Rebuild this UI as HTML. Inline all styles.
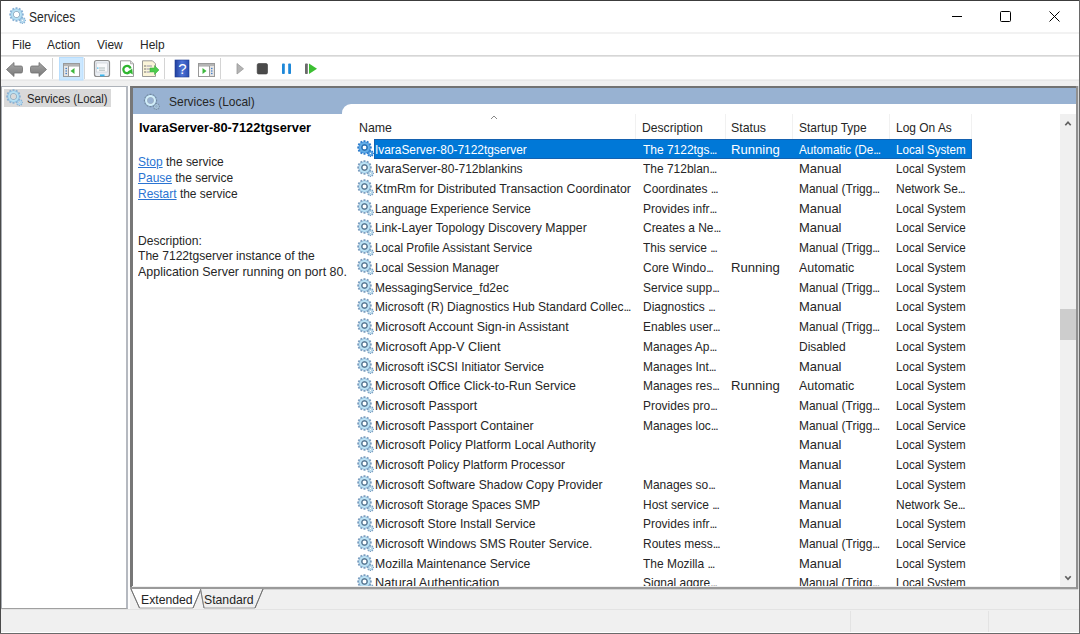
<!DOCTYPE html>
<html><head><meta charset="utf-8">
<style>
*{margin:0;padding:0;box-sizing:border-box}
html,body{width:1080px;height:634px;overflow:hidden;background:#f0f0f0;font-family:"Liberation Sans",sans-serif;color:#000}
.a{position:absolute}
.t{position:absolute;white-space:nowrap;font-size:13px;line-height:15px;transform-origin:0 0;transform:scaleX(.92);color:#262626}
.t.s{color:#fff}
.el{letter-spacing:-1.2px}
.gi{position:absolute;left:356.5px;width:17px;height:17px}
</style></head><body>
<svg width="0" height="0" style="position:absolute"><symbol id="gear" viewBox="0 0 17 17">
<defs><radialGradient id="gearg" cx="0.5" cy="0.5" r="0.5"><stop offset="0.3" stop-color="#d4f0fb"/><stop offset="1" stop-color="#b0dcf2"/></radialGradient></defs>
<path d="M15.89,12.65 L16.94,12.73 L16.94,14.07 L15.89,14.15 L15.69,14.63 L16.38,15.42 L15.42,16.38 L14.63,15.69 L14.15,15.89 L14.07,16.94 L12.73,16.94 L12.65,15.89 L12.17,15.69 L11.38,16.38 L10.42,15.42 L11.11,14.63 L10.91,14.15 L9.86,14.07 L9.86,12.73 L10.91,12.65 L11.11,12.17 L10.42,11.38 L11.38,10.42 L12.17,11.11 L12.65,10.91 L12.73,9.86 L14.07,9.86 L14.15,10.91 L14.63,11.11 L15.42,10.42 L16.38,11.38 L15.69,12.17Z M14.40,13.40 L14.32,13.78 L14.11,14.11 L13.78,14.32 L13.40,14.40 L13.02,14.32 L12.69,14.11 L12.48,13.78 L12.40,13.40 L12.48,13.02 L12.69,12.69 L13.02,12.48 L13.40,12.40 L13.78,12.48 L14.11,12.69 L14.32,13.02Z" fill="#7a9ec0" fill-rule="evenodd"/>
<path d="M15.90,13.40 L15.81,14.05 L15.57,14.65 L15.17,15.17 L14.65,15.57 L14.05,15.81 L13.40,15.90 L12.75,15.81 L12.15,15.57 L11.63,15.17 L11.23,14.65 L10.99,14.05 L10.90,13.40 L10.99,12.75 L11.23,12.15 L11.63,11.63 L12.15,11.23 L12.75,10.99 L13.40,10.90 L14.05,10.99 L14.65,11.23 L15.17,11.63 L15.57,12.15 L15.81,12.75Z M14.40,13.40 L14.32,13.78 L14.11,14.11 L13.78,14.32 L13.40,14.40 L13.02,14.32 L12.69,14.11 L12.48,13.78 L12.40,13.40 L12.48,13.02 L12.69,12.69 L13.02,12.48 L13.40,12.40 L13.78,12.48 L14.11,12.69 L14.32,13.02Z" fill="#c0e0f0" fill-rule="evenodd"/>
<path d="M13.08,6.35 L14.74,6.55 L14.74,8.45 L13.08,8.65 L12.91,9.30 L14.24,10.30 L13.30,11.94 L11.76,11.29 L11.29,11.76 L11.94,13.30 L10.30,14.24 L9.30,12.91 L8.65,13.08 L8.45,14.74 L6.55,14.74 L6.35,13.08 L5.70,12.91 L4.70,14.24 L3.06,13.30 L3.71,11.76 L3.24,11.29 L1.70,11.94 L0.76,10.30 L2.09,9.30 L1.92,8.65 L0.26,8.45 L0.26,6.55 L1.92,6.35 L2.09,5.70 L0.76,4.70 L1.70,3.06 L3.24,3.71 L3.71,3.24 L3.06,1.70 L4.70,0.76 L5.70,2.09 L6.35,1.92 L6.55,0.26 L8.45,0.26 L8.65,1.92 L9.30,2.09 L10.30,0.76 L11.94,1.70 L11.29,3.24 L11.76,3.71 L13.30,3.06 L14.24,4.70 L12.91,5.70Z M9.50,7.50 L9.48,7.81 L9.40,8.12 L9.28,8.41 L9.12,8.68 L8.91,8.91 L8.68,9.12 L8.41,9.28 L8.12,9.40 L7.81,9.48 L7.50,9.50 L7.19,9.48 L6.88,9.40 L6.59,9.28 L6.32,9.12 L6.09,8.91 L5.88,8.68 L5.72,8.41 L5.60,8.12 L5.52,7.81 L5.50,7.50 L5.52,7.19 L5.60,6.88 L5.72,6.59 L5.88,6.32 L6.09,6.09 L6.32,5.88 L6.59,5.72 L6.88,5.60 L7.19,5.52 L7.50,5.50 L7.81,5.52 L8.12,5.60 L8.41,5.72 L8.68,5.88 L8.91,6.09 L9.12,6.32 L9.28,6.59 L9.40,6.88 L9.48,7.19Z" fill="#7a9ec0" fill-rule="evenodd"/>
<path d="M13.00,7.50 L12.93,8.36 L12.73,9.20 L12.40,10.00 L11.95,10.73 L11.39,11.39 L10.73,11.95 L10.00,12.40 L9.20,12.73 L8.36,12.93 L7.50,13.00 L6.64,12.93 L5.80,12.73 L5.00,12.40 L4.27,11.95 L3.61,11.39 L3.05,10.73 L2.60,10.00 L2.27,9.20 L2.07,8.36 L2.00,7.50 L2.07,6.64 L2.27,5.80 L2.60,5.00 L3.05,4.27 L3.61,3.61 L4.27,3.05 L5.00,2.60 L5.80,2.27 L6.64,2.07 L7.50,2.00 L8.36,2.07 L9.20,2.27 L10.00,2.60 L10.73,3.05 L11.39,3.61 L11.95,4.27 L12.40,5.00 L12.73,5.80 L12.93,6.64Z M9.50,7.50 L9.48,7.81 L9.40,8.12 L9.28,8.41 L9.12,8.68 L8.91,8.91 L8.68,9.12 L8.41,9.28 L8.12,9.40 L7.81,9.48 L7.50,9.50 L7.19,9.48 L6.88,9.40 L6.59,9.28 L6.32,9.12 L6.09,8.91 L5.88,8.68 L5.72,8.41 L5.60,8.12 L5.52,7.81 L5.50,7.50 L5.52,7.19 L5.60,6.88 L5.72,6.59 L5.88,6.32 L6.09,6.09 L6.32,5.88 L6.59,5.72 L6.88,5.60 L7.19,5.52 L7.50,5.50 L7.81,5.52 L8.12,5.60 L8.41,5.72 L8.68,5.88 L8.91,6.09 L9.12,6.32 L9.28,6.59 L9.40,6.88 L9.48,7.19Z" fill="url(#gearg)" fill-rule="evenodd"/>
<path d="M10.90,7.50 L10.86,8.03 L10.73,8.55 L10.53,9.04 L10.25,9.50 L9.90,9.90 L9.50,10.25 L9.04,10.53 L8.55,10.73 L8.03,10.86 L7.50,10.90 L6.97,10.86 L6.45,10.73 L5.96,10.53 L5.50,10.25 L5.10,9.90 L4.75,9.50 L4.47,9.04 L4.27,8.55 L4.14,8.03 L4.10,7.50 L4.14,6.97 L4.27,6.45 L4.47,5.96 L4.75,5.50 L5.10,5.10 L5.50,4.75 L5.96,4.47 L6.45,4.27 L6.97,4.14 L7.50,4.10 L8.03,4.14 L8.55,4.27 L9.04,4.47 L9.50,4.75 L9.90,5.10 L10.25,5.50 L10.53,5.96 L10.73,6.45 L10.86,6.97Z M9.50,7.50 L9.48,7.81 L9.40,8.12 L9.28,8.41 L9.12,8.68 L8.91,8.91 L8.68,9.12 L8.41,9.28 L8.12,9.40 L7.81,9.48 L7.50,9.50 L7.19,9.48 L6.88,9.40 L6.59,9.28 L6.32,9.12 L6.09,8.91 L5.88,8.68 L5.72,8.41 L5.60,8.12 L5.52,7.81 L5.50,7.50 L5.52,7.19 L5.60,6.88 L5.72,6.59 L5.88,6.32 L6.09,6.09 L6.32,5.88 L6.59,5.72 L6.88,5.60 L7.19,5.52 L7.50,5.50 L7.81,5.52 L8.12,5.60 L8.41,5.72 L8.68,5.88 L8.91,6.09 L9.12,6.32 L9.28,6.59 L9.40,6.88 L9.48,7.19Z" fill="#5a7893" fill-rule="evenodd"/>
</symbol><symbol id="gears" viewBox="0 0 17 17">
<defs><radialGradient id="gearsg" cx="0.5" cy="0.5" r="0.5"><stop offset="0.3" stop-color="#7cc0f0"/><stop offset="1" stop-color="#56a4e4"/></radialGradient></defs>
<path d="M15.89,12.65 L16.94,12.73 L16.94,14.07 L15.89,14.15 L15.69,14.63 L16.38,15.42 L15.42,16.38 L14.63,15.69 L14.15,15.89 L14.07,16.94 L12.73,16.94 L12.65,15.89 L12.17,15.69 L11.38,16.38 L10.42,15.42 L11.11,14.63 L10.91,14.15 L9.86,14.07 L9.86,12.73 L10.91,12.65 L11.11,12.17 L10.42,11.38 L11.38,10.42 L12.17,11.11 L12.65,10.91 L12.73,9.86 L14.07,9.86 L14.15,10.91 L14.63,11.11 L15.42,10.42 L16.38,11.38 L15.69,12.17Z M14.40,13.40 L14.32,13.78 L14.11,14.11 L13.78,14.32 L13.40,14.40 L13.02,14.32 L12.69,14.11 L12.48,13.78 L12.40,13.40 L12.48,13.02 L12.69,12.69 L13.02,12.48 L13.40,12.40 L13.78,12.48 L14.11,12.69 L14.32,13.02Z" fill="#2c7ccc" fill-rule="evenodd"/>
<path d="M15.90,13.40 L15.81,14.05 L15.57,14.65 L15.17,15.17 L14.65,15.57 L14.05,15.81 L13.40,15.90 L12.75,15.81 L12.15,15.57 L11.63,15.17 L11.23,14.65 L10.99,14.05 L10.90,13.40 L10.99,12.75 L11.23,12.15 L11.63,11.63 L12.15,11.23 L12.75,10.99 L13.40,10.90 L14.05,10.99 L14.65,11.23 L15.17,11.63 L15.57,12.15 L15.81,12.75Z M14.40,13.40 L14.32,13.78 L14.11,14.11 L13.78,14.32 L13.40,14.40 L13.02,14.32 L12.69,14.11 L12.48,13.78 L12.40,13.40 L12.48,13.02 L12.69,12.69 L13.02,12.48 L13.40,12.40 L13.78,12.48 L14.11,12.69 L14.32,13.02Z" fill="#5aa6e6" fill-rule="evenodd"/>
<path d="M13.08,6.35 L14.74,6.55 L14.74,8.45 L13.08,8.65 L12.91,9.30 L14.24,10.30 L13.30,11.94 L11.76,11.29 L11.29,11.76 L11.94,13.30 L10.30,14.24 L9.30,12.91 L8.65,13.08 L8.45,14.74 L6.55,14.74 L6.35,13.08 L5.70,12.91 L4.70,14.24 L3.06,13.30 L3.71,11.76 L3.24,11.29 L1.70,11.94 L0.76,10.30 L2.09,9.30 L1.92,8.65 L0.26,8.45 L0.26,6.55 L1.92,6.35 L2.09,5.70 L0.76,4.70 L1.70,3.06 L3.24,3.71 L3.71,3.24 L3.06,1.70 L4.70,0.76 L5.70,2.09 L6.35,1.92 L6.55,0.26 L8.45,0.26 L8.65,1.92 L9.30,2.09 L10.30,0.76 L11.94,1.70 L11.29,3.24 L11.76,3.71 L13.30,3.06 L14.24,4.70 L12.91,5.70Z M9.50,7.50 L9.48,7.81 L9.40,8.12 L9.28,8.41 L9.12,8.68 L8.91,8.91 L8.68,9.12 L8.41,9.28 L8.12,9.40 L7.81,9.48 L7.50,9.50 L7.19,9.48 L6.88,9.40 L6.59,9.28 L6.32,9.12 L6.09,8.91 L5.88,8.68 L5.72,8.41 L5.60,8.12 L5.52,7.81 L5.50,7.50 L5.52,7.19 L5.60,6.88 L5.72,6.59 L5.88,6.32 L6.09,6.09 L6.32,5.88 L6.59,5.72 L6.88,5.60 L7.19,5.52 L7.50,5.50 L7.81,5.52 L8.12,5.60 L8.41,5.72 L8.68,5.88 L8.91,6.09 L9.12,6.32 L9.28,6.59 L9.40,6.88 L9.48,7.19Z" fill="#2c7ccc" fill-rule="evenodd"/>
<path d="M13.00,7.50 L12.93,8.36 L12.73,9.20 L12.40,10.00 L11.95,10.73 L11.39,11.39 L10.73,11.95 L10.00,12.40 L9.20,12.73 L8.36,12.93 L7.50,13.00 L6.64,12.93 L5.80,12.73 L5.00,12.40 L4.27,11.95 L3.61,11.39 L3.05,10.73 L2.60,10.00 L2.27,9.20 L2.07,8.36 L2.00,7.50 L2.07,6.64 L2.27,5.80 L2.60,5.00 L3.05,4.27 L3.61,3.61 L4.27,3.05 L5.00,2.60 L5.80,2.27 L6.64,2.07 L7.50,2.00 L8.36,2.07 L9.20,2.27 L10.00,2.60 L10.73,3.05 L11.39,3.61 L11.95,4.27 L12.40,5.00 L12.73,5.80 L12.93,6.64Z M9.50,7.50 L9.48,7.81 L9.40,8.12 L9.28,8.41 L9.12,8.68 L8.91,8.91 L8.68,9.12 L8.41,9.28 L8.12,9.40 L7.81,9.48 L7.50,9.50 L7.19,9.48 L6.88,9.40 L6.59,9.28 L6.32,9.12 L6.09,8.91 L5.88,8.68 L5.72,8.41 L5.60,8.12 L5.52,7.81 L5.50,7.50 L5.52,7.19 L5.60,6.88 L5.72,6.59 L5.88,6.32 L6.09,6.09 L6.32,5.88 L6.59,5.72 L6.88,5.60 L7.19,5.52 L7.50,5.50 L7.81,5.52 L8.12,5.60 L8.41,5.72 L8.68,5.88 L8.91,6.09 L9.12,6.32 L9.28,6.59 L9.40,6.88 L9.48,7.19Z" fill="url(#gearsg)" fill-rule="evenodd"/>
<path d="M10.90,7.50 L10.86,8.03 L10.73,8.55 L10.53,9.04 L10.25,9.50 L9.90,9.90 L9.50,10.25 L9.04,10.53 L8.55,10.73 L8.03,10.86 L7.50,10.90 L6.97,10.86 L6.45,10.73 L5.96,10.53 L5.50,10.25 L5.10,9.90 L4.75,9.50 L4.47,9.04 L4.27,8.55 L4.14,8.03 L4.10,7.50 L4.14,6.97 L4.27,6.45 L4.47,5.96 L4.75,5.50 L5.10,5.10 L5.50,4.75 L5.96,4.47 L6.45,4.27 L6.97,4.14 L7.50,4.10 L8.03,4.14 L8.55,4.27 L9.04,4.47 L9.50,4.75 L9.90,5.10 L10.25,5.50 L10.53,5.96 L10.73,6.45 L10.86,6.97Z M9.50,7.50 L9.48,7.81 L9.40,8.12 L9.28,8.41 L9.12,8.68 L8.91,8.91 L8.68,9.12 L8.41,9.28 L8.12,9.40 L7.81,9.48 L7.50,9.50 L7.19,9.48 L6.88,9.40 L6.59,9.28 L6.32,9.12 L6.09,8.91 L5.88,8.68 L5.72,8.41 L5.60,8.12 L5.52,7.81 L5.50,7.50 L5.52,7.19 L5.60,6.88 L5.72,6.59 L5.88,6.32 L6.09,6.09 L6.32,5.88 L6.59,5.72 L6.88,5.60 L7.19,5.52 L7.50,5.50 L7.81,5.52 L8.12,5.60 L8.41,5.72 L8.68,5.88 L8.91,6.09 L9.12,6.32 L9.28,6.59 L9.40,6.88 L9.48,7.19Z" fill="#2a6fb0" fill-rule="evenodd"/>
</symbol><symbol id="gearl" viewBox="0 0 17 17">
<defs><radialGradient id="gearlg" cx="0.5" cy="0.5" r="0.5"><stop offset="0.3" stop-color="#d4f2fc"/><stop offset="1" stop-color="#a8d8f0"/></radialGradient></defs>
<path d="M15.89,12.65 L16.94,12.73 L16.94,14.07 L15.89,14.15 L15.69,14.63 L16.38,15.42 L15.42,16.38 L14.63,15.69 L14.15,15.89 L14.07,16.94 L12.73,16.94 L12.65,15.89 L12.17,15.69 L11.38,16.38 L10.42,15.42 L11.11,14.63 L10.91,14.15 L9.86,14.07 L9.86,12.73 L10.91,12.65 L11.11,12.17 L10.42,11.38 L11.38,10.42 L12.17,11.11 L12.65,10.91 L12.73,9.86 L14.07,9.86 L14.15,10.91 L14.63,11.11 L15.42,10.42 L16.38,11.38 L15.69,12.17Z M14.40,13.40 L14.32,13.78 L14.11,14.11 L13.78,14.32 L13.40,14.40 L13.02,14.32 L12.69,14.11 L12.48,13.78 L12.40,13.40 L12.48,13.02 L12.69,12.69 L13.02,12.48 L13.40,12.40 L13.78,12.48 L14.11,12.69 L14.32,13.02Z" fill="#88b2d6" fill-rule="evenodd"/>
<path d="M15.90,13.40 L15.81,14.05 L15.57,14.65 L15.17,15.17 L14.65,15.57 L14.05,15.81 L13.40,15.90 L12.75,15.81 L12.15,15.57 L11.63,15.17 L11.23,14.65 L10.99,14.05 L10.90,13.40 L10.99,12.75 L11.23,12.15 L11.63,11.63 L12.15,11.23 L12.75,10.99 L13.40,10.90 L14.05,10.99 L14.65,11.23 L15.17,11.63 L15.57,12.15 L15.81,12.75Z M14.40,13.40 L14.32,13.78 L14.11,14.11 L13.78,14.32 L13.40,14.40 L13.02,14.32 L12.69,14.11 L12.48,13.78 L12.40,13.40 L12.48,13.02 L12.69,12.69 L13.02,12.48 L13.40,12.40 L13.78,12.48 L14.11,12.69 L14.32,13.02Z" fill="#b8dcf0" fill-rule="evenodd"/>
<path d="M13.08,6.35 L14.74,6.55 L14.74,8.45 L13.08,8.65 L12.91,9.30 L14.24,10.30 L13.30,11.94 L11.76,11.29 L11.29,11.76 L11.94,13.30 L10.30,14.24 L9.30,12.91 L8.65,13.08 L8.45,14.74 L6.55,14.74 L6.35,13.08 L5.70,12.91 L4.70,14.24 L3.06,13.30 L3.71,11.76 L3.24,11.29 L1.70,11.94 L0.76,10.30 L2.09,9.30 L1.92,8.65 L0.26,8.45 L0.26,6.55 L1.92,6.35 L2.09,5.70 L0.76,4.70 L1.70,3.06 L3.24,3.71 L3.71,3.24 L3.06,1.70 L4.70,0.76 L5.70,2.09 L6.35,1.92 L6.55,0.26 L8.45,0.26 L8.65,1.92 L9.30,2.09 L10.30,0.76 L11.94,1.70 L11.29,3.24 L11.76,3.71 L13.30,3.06 L14.24,4.70 L12.91,5.70Z M10.30,7.50 L10.27,7.94 L10.16,8.37 L9.99,8.77 L9.77,9.15 L9.48,9.48 L9.15,9.77 L8.77,9.99 L8.37,10.16 L7.94,10.27 L7.50,10.30 L7.06,10.27 L6.63,10.16 L6.23,9.99 L5.85,9.77 L5.52,9.48 L5.23,9.15 L5.01,8.77 L4.84,8.37 L4.73,7.94 L4.70,7.50 L4.73,7.06 L4.84,6.63 L5.01,6.23 L5.23,5.85 L5.52,5.52 L5.85,5.23 L6.23,5.01 L6.63,4.84 L7.06,4.73 L7.50,4.70 L7.94,4.73 L8.37,4.84 L8.77,5.01 L9.15,5.23 L9.48,5.52 L9.77,5.85 L9.99,6.23 L10.16,6.63 L10.27,7.06Z" fill="#88b2d6" fill-rule="evenodd"/>
<path d="M13.00,7.50 L12.93,8.36 L12.73,9.20 L12.40,10.00 L11.95,10.73 L11.39,11.39 L10.73,11.95 L10.00,12.40 L9.20,12.73 L8.36,12.93 L7.50,13.00 L6.64,12.93 L5.80,12.73 L5.00,12.40 L4.27,11.95 L3.61,11.39 L3.05,10.73 L2.60,10.00 L2.27,9.20 L2.07,8.36 L2.00,7.50 L2.07,6.64 L2.27,5.80 L2.60,5.00 L3.05,4.27 L3.61,3.61 L4.27,3.05 L5.00,2.60 L5.80,2.27 L6.64,2.07 L7.50,2.00 L8.36,2.07 L9.20,2.27 L10.00,2.60 L10.73,3.05 L11.39,3.61 L11.95,4.27 L12.40,5.00 L12.73,5.80 L12.93,6.64Z M10.30,7.50 L10.27,7.94 L10.16,8.37 L9.99,8.77 L9.77,9.15 L9.48,9.48 L9.15,9.77 L8.77,9.99 L8.37,10.16 L7.94,10.27 L7.50,10.30 L7.06,10.27 L6.63,10.16 L6.23,9.99 L5.85,9.77 L5.52,9.48 L5.23,9.15 L5.01,8.77 L4.84,8.37 L4.73,7.94 L4.70,7.50 L4.73,7.06 L4.84,6.63 L5.01,6.23 L5.23,5.85 L5.52,5.52 L5.85,5.23 L6.23,5.01 L6.63,4.84 L7.06,4.73 L7.50,4.70 L7.94,4.73 L8.37,4.84 L8.77,5.01 L9.15,5.23 L9.48,5.52 L9.77,5.85 L9.99,6.23 L10.16,6.63 L10.27,7.06Z" fill="url(#gearlg)" fill-rule="evenodd"/>
<path d="M11.00,7.50 L10.96,8.05 L10.83,8.58 L10.62,9.09 L10.33,9.56 L9.97,9.97 L9.56,10.33 L9.09,10.62 L8.58,10.83 L8.05,10.96 L7.50,11.00 L6.95,10.96 L6.42,10.83 L5.91,10.62 L5.44,10.33 L5.03,9.97 L4.67,9.56 L4.38,9.09 L4.17,8.58 L4.04,8.05 L4.00,7.50 L4.04,6.95 L4.17,6.42 L4.38,5.91 L4.67,5.44 L5.03,5.03 L5.44,4.67 L5.91,4.38 L6.42,4.17 L6.95,4.04 L7.50,4.00 L8.05,4.04 L8.58,4.17 L9.09,4.38 L9.56,4.67 L9.97,5.03 L10.33,5.44 L10.62,5.91 L10.83,6.42 L10.96,6.95Z M10.30,7.50 L10.27,7.94 L10.16,8.37 L9.99,8.77 L9.77,9.15 L9.48,9.48 L9.15,9.77 L8.77,9.99 L8.37,10.16 L7.94,10.27 L7.50,10.30 L7.06,10.27 L6.63,10.16 L6.23,9.99 L5.85,9.77 L5.52,9.48 L5.23,9.15 L5.01,8.77 L4.84,8.37 L4.73,7.94 L4.70,7.50 L4.73,7.06 L4.84,6.63 L5.01,6.23 L5.23,5.85 L5.52,5.52 L5.85,5.23 L6.23,5.01 L6.63,4.84 L7.06,4.73 L7.50,4.70 L7.94,4.73 L8.37,4.84 L8.77,5.01 L9.15,5.23 L9.48,5.52 L9.77,5.85 L9.99,6.23 L10.16,6.63 L10.27,7.06Z" fill="#8fa4b6" fill-rule="evenodd"/>
</symbol><symbol id="gearh" viewBox="0 0 17 17">
<defs><radialGradient id="gearhg" cx="0.5" cy="0.5" r="0.5"><stop offset="0.3" stop-color="#f4fcff"/><stop offset="1" stop-color="#c4e8f8"/></radialGradient></defs>
<path d="M15.89,12.65 L16.94,12.73 L16.94,14.07 L15.89,14.15 L15.69,14.63 L16.38,15.42 L15.42,16.38 L14.63,15.69 L14.15,15.89 L14.07,16.94 L12.73,16.94 L12.65,15.89 L12.17,15.69 L11.38,16.38 L10.42,15.42 L11.11,14.63 L10.91,14.15 L9.86,14.07 L9.86,12.73 L10.91,12.65 L11.11,12.17 L10.42,11.38 L11.38,10.42 L12.17,11.11 L12.65,10.91 L12.73,9.86 L14.07,9.86 L14.15,10.91 L14.63,11.11 L15.42,10.42 L16.38,11.38 L15.69,12.17Z M14.40,13.40 L14.32,13.78 L14.11,14.11 L13.78,14.32 L13.40,14.40 L13.02,14.32 L12.69,14.11 L12.48,13.78 L12.40,13.40 L12.48,13.02 L12.69,12.69 L13.02,12.48 L13.40,12.40 L13.78,12.48 L14.11,12.69 L14.32,13.02Z" fill="#7b91a8" fill-rule="evenodd"/>
<path d="M15.90,13.40 L15.81,14.05 L15.57,14.65 L15.17,15.17 L14.65,15.57 L14.05,15.81 L13.40,15.90 L12.75,15.81 L12.15,15.57 L11.63,15.17 L11.23,14.65 L10.99,14.05 L10.90,13.40 L10.99,12.75 L11.23,12.15 L11.63,11.63 L12.15,11.23 L12.75,10.99 L13.40,10.90 L14.05,10.99 L14.65,11.23 L15.17,11.63 L15.57,12.15 L15.81,12.75Z M14.40,13.40 L14.32,13.78 L14.11,14.11 L13.78,14.32 L13.40,14.40 L13.02,14.32 L12.69,14.11 L12.48,13.78 L12.40,13.40 L12.48,13.02 L12.69,12.69 L13.02,12.48 L13.40,12.40 L13.78,12.48 L14.11,12.69 L14.32,13.02Z" fill="#a9c6dc" fill-rule="evenodd"/>
<path d="M13.08,6.35 L14.14,6.63 L14.14,8.37 L13.08,8.65 L12.91,9.30 L13.69,10.07 L12.82,11.57 L11.76,11.29 L11.29,11.76 L11.57,12.82 L10.07,13.69 L9.30,12.91 L8.65,13.08 L8.37,14.14 L6.63,14.14 L6.35,13.08 L5.70,12.91 L4.93,13.69 L3.43,12.82 L3.71,11.76 L3.24,11.29 L2.18,11.57 L1.31,10.07 L2.09,9.30 L1.92,8.65 L0.86,8.37 L0.86,6.63 L1.92,6.35 L2.09,5.70 L1.31,4.93 L2.18,3.43 L3.24,3.71 L3.71,3.24 L3.43,2.18 L4.93,1.31 L5.70,2.09 L6.35,1.92 L6.63,0.86 L8.37,0.86 L8.65,1.92 L9.30,2.09 L10.07,1.31 L11.57,2.18 L11.29,3.24 L11.76,3.71 L12.82,3.43 L13.69,4.93 L12.91,5.70Z M10.60,7.50 L10.56,7.98 L10.45,8.46 L10.26,8.91 L10.01,9.32 L9.69,9.69 L9.32,10.01 L8.91,10.26 L8.46,10.45 L7.98,10.56 L7.50,10.60 L7.02,10.56 L6.54,10.45 L6.09,10.26 L5.68,10.01 L5.31,9.69 L4.99,9.32 L4.74,8.91 L4.55,8.46 L4.44,7.98 L4.40,7.50 L4.44,7.02 L4.55,6.54 L4.74,6.09 L4.99,5.68 L5.31,5.31 L5.68,4.99 L6.09,4.74 L6.54,4.55 L7.02,4.44 L7.50,4.40 L7.98,4.44 L8.46,4.55 L8.91,4.74 L9.32,4.99 L9.69,5.31 L10.01,5.68 L10.26,6.09 L10.45,6.54 L10.56,7.02Z" fill="#71879f" fill-rule="evenodd"/>
<path d="M13.00,7.50 L12.93,8.36 L12.73,9.20 L12.40,10.00 L11.95,10.73 L11.39,11.39 L10.73,11.95 L10.00,12.40 L9.20,12.73 L8.36,12.93 L7.50,13.00 L6.64,12.93 L5.80,12.73 L5.00,12.40 L4.27,11.95 L3.61,11.39 L3.05,10.73 L2.60,10.00 L2.27,9.20 L2.07,8.36 L2.00,7.50 L2.07,6.64 L2.27,5.80 L2.60,5.00 L3.05,4.27 L3.61,3.61 L4.27,3.05 L5.00,2.60 L5.80,2.27 L6.64,2.07 L7.50,2.00 L8.36,2.07 L9.20,2.27 L10.00,2.60 L10.73,3.05 L11.39,3.61 L11.95,4.27 L12.40,5.00 L12.73,5.80 L12.93,6.64Z M10.60,7.50 L10.56,7.98 L10.45,8.46 L10.26,8.91 L10.01,9.32 L9.69,9.69 L9.32,10.01 L8.91,10.26 L8.46,10.45 L7.98,10.56 L7.50,10.60 L7.02,10.56 L6.54,10.45 L6.09,10.26 L5.68,10.01 L5.31,9.69 L4.99,9.32 L4.74,8.91 L4.55,8.46 L4.44,7.98 L4.40,7.50 L4.44,7.02 L4.55,6.54 L4.74,6.09 L4.99,5.68 L5.31,5.31 L5.68,4.99 L6.09,4.74 L6.54,4.55 L7.02,4.44 L7.50,4.40 L7.98,4.44 L8.46,4.55 L8.91,4.74 L9.32,4.99 L9.69,5.31 L10.01,5.68 L10.26,6.09 L10.45,6.54 L10.56,7.02Z" fill="url(#gearhg)" fill-rule="evenodd"/>
<path d="M11.00,7.50 L10.96,8.05 L10.83,8.58 L10.62,9.09 L10.33,9.56 L9.97,9.97 L9.56,10.33 L9.09,10.62 L8.58,10.83 L8.05,10.96 L7.50,11.00 L6.95,10.96 L6.42,10.83 L5.91,10.62 L5.44,10.33 L5.03,9.97 L4.67,9.56 L4.38,9.09 L4.17,8.58 L4.04,8.05 L4.00,7.50 L4.04,6.95 L4.17,6.42 L4.38,5.91 L4.67,5.44 L5.03,5.03 L5.44,4.67 L5.91,4.38 L6.42,4.17 L6.95,4.04 L7.50,4.00 L8.05,4.04 L8.58,4.17 L9.09,4.38 L9.56,4.67 L9.97,5.03 L10.33,5.44 L10.62,5.91 L10.83,6.42 L10.96,6.95Z M10.60,7.50 L10.56,7.98 L10.45,8.46 L10.26,8.91 L10.01,9.32 L9.69,9.69 L9.32,10.01 L8.91,10.26 L8.46,10.45 L7.98,10.56 L7.50,10.60 L7.02,10.56 L6.54,10.45 L6.09,10.26 L5.68,10.01 L5.31,9.69 L4.99,9.32 L4.74,8.91 L4.55,8.46 L4.44,7.98 L4.40,7.50 L4.44,7.02 L4.55,6.54 L4.74,6.09 L4.99,5.68 L5.31,5.31 L5.68,4.99 L6.09,4.74 L6.54,4.55 L7.02,4.44 L7.50,4.40 L7.98,4.44 L8.46,4.55 L8.91,4.74 L9.32,4.99 L9.69,5.31 L10.01,5.68 L10.26,6.09 L10.45,6.54 L10.56,7.02Z" fill="#8da4ba" fill-rule="evenodd"/>
</symbol></svg>
<!-- window bg -->
<div class="a" style="left:0;top:0;width:1080px;height:634px;background:#fff"></div>
<!-- title bar -->
<svg class="a" style="left:8.5px;top:7px;width:17px;height:17px"><use href="#gearl"/></svg>
<div class="t" style="left:29px;top:10px;font-size:14px;transform:scaleX(.86)">Services</div>
<div class="a" style="left:952px;top:16px;width:10px;height:1px;background:#000"></div>
<div class="a" style="left:1000px;top:11px;width:11px;height:11px;border:1px solid #000;border-radius:1.5px"></div>
<svg class="a" style="left:1048px;top:10px;width:13px;height:13px" viewBox="0 0 13 13"><path d="M1.5 1.5L11.5 11.5M11.5 1.5L1.5 11.5" stroke="#000" stroke-width="1"/></svg>
<div class="a" style="left:1px;top:32px;width:1078px;height:2px;background:#f2f2f2"></div>
<!-- menu -->
<div class="t" style="left:12px;top:37px">File</div>
<div class="t" style="left:47px;top:37px">Action</div>
<div class="t" style="left:97px;top:37px">View</div>
<div class="t" style="left:139.5px;top:37px">Help</div>
<div class="a" style="left:1px;top:55px;width:1078px;height:1px;background:#d6d6d6"></div><div class="a" style="left:1px;top:56px;width:1078px;height:1px;background:#e4e4e4"></div>
<!-- toolbar band -->
<div class="a" style="left:1px;top:79px;width:1078px;height:554px;background:#f0f0f0"></div><div class="a" style="left:1px;top:80px;width:1078px;height:1px;background:#e8e8e8"></div>
<!-- toolbar icons -->
<div class="a" style="left:52px;top:58px;width:1px;height:21px;background:#d4d4d4"></div>
<div class="a" style="left:84px;top:58px;width:1px;height:21px;background:#d4d4d4"></div>
<div class="a" style="left:164px;top:58px;width:1px;height:21px;background:#d4d4d4"></div>
<div class="a" style="left:220px;top:58px;width:1px;height:21px;background:#d4d4d4"></div>
<svg class="a" style="left:0;top:56px;width:330px;height:25px" viewBox="0 56 330 25">
<defs>
<linearGradient id="ag" x1="0" y1="0" x2="0" y2="1"><stop offset="0" stop-color="#a8a8a8"/><stop offset="1" stop-color="#777"/></linearGradient>
<linearGradient id="hg" x1="0" y1="0" x2="1" y2="0"><stop offset="0" stop-color="#1f3f9e"/><stop offset="0.5" stop-color="#4f74d8"/><stop offset="1" stop-color="#2a4db0"/></linearGradient>
</defs>
<path d="M6.5 69.5 L14 62.5 L14 66 L21 66 Q22.5 66 22.5 67.5 L22.5 71.5 Q22.5 73 21 73 L14 73 L14 76.5 Z" fill="url(#ag)" stroke="#707070" stroke-width="0.8"/>
<path d="M46.5 69.5 L39 62.5 L39 66 L32 66 Q30.5 66 30.5 67.5 L30.5 71.5 Q30.5 73 32 73 L39 73 L39 76.5 Z" fill="url(#ag)" stroke="#707070" stroke-width="0.8"/>
<rect x="59.5" y="57.5" width="23.5" height="22.5" fill="#cce8ff" stroke="#b8defe" stroke-width="1"/>
<rect x="63.5" y="63.5" width="16" height="13" fill="#fff" stroke="#999" stroke-width="1"/>
<rect x="64" y="64" width="15" height="2" fill="#b4b4b4"/><rect x="64" y="66" width="15" height="1" fill="#d0d0d0"/>
<rect x="64" y="66" width="4.5" height="10" fill="#e4e4e4"/>
<line x1="68.5" y1="66" x2="68.5" y2="76" stroke="#9a9a9a" stroke-width="1"/>
<circle cx="66.2" cy="68.5" r="0.8" fill="#3a78c8"/><circle cx="66.2" cy="71" r="0.8" fill="#3a78c8"/><circle cx="66.2" cy="73.5" r="0.8" fill="#3a78c8"/>
<path d="M70.5 71 L74.5 68 L74.5 74 Z" fill="#3db83d"/>
<rect x="94.5" y="60.5" width="15" height="16" rx="2" fill="#e9edf2" stroke="#8e8e8e" stroke-width="1.2"/>
<rect x="96.5" y="63" width="11" height="9" fill="#f8f9fb" stroke="#c5c9cf" stroke-width="0.6"/>
<line x1="99" y1="68" x2="105" y2="68" stroke="#9aa" stroke-width="0.8"/><line x1="99" y1="70.2" x2="105" y2="70.2" stroke="#9aa" stroke-width="0.8"/>
<rect x="97" y="67.5" width="1.5" height="1.2" fill="#4cc0f0"/>
<rect x="100" y="74.5" width="4.5" height="1.8" fill="#3bb6ee"/>
<path d="M120.5 60.8 L130.5 60.8 L133.5 63.8 L133.5 76.5 L120.5 76.5 Z" fill="#fff" stroke="#8f8f8f" stroke-width="0.9"/>
<path d="M130.5 60.8 L130.5 63.8 L133.5 63.8" fill="#ddd" stroke="#8f8f8f" stroke-width="0.6"/>
<path d="M129.6 72.2 A3.7 3.7 0 1 1 130.6 68.5" fill="none" stroke="#2fb52f" stroke-width="2.3"/>
<path d="M127.6 71.6 L132.8 74.6 L132.2 68.8 Z" fill="#2fb52f"/>
<path d="M142.5 60.8 L152.5 60.8 L155.5 63.8 L155.5 76.5 L142.5 76.5 Z" fill="#fbf5d9" stroke="#8f8f8f" stroke-width="0.9"/>
<circle cx="145" cy="66" r="0.7" fill="#444"/><circle cx="145" cy="69" r="0.7" fill="#444"/><circle cx="145" cy="72" r="0.7" fill="#444"/>
<line x1="146.5" y1="66" x2="152" y2="66" stroke="#8a8aa8" stroke-width="0.9"/><line x1="146.5" y1="69" x2="151" y2="69" stroke="#8a8aa8" stroke-width="0.9"/><line x1="146.5" y1="72" x2="150" y2="72" stroke="#8a8aa8" stroke-width="0.9"/>
<path d="M150 68 L154.5 68 L154.5 65.5 L159 70 L154.5 74.5 L154.5 72 L150 72 Z" fill="#4ccc4c" stroke="#36a836" stroke-width="0.5"/>
<rect x="175" y="60" width="14" height="17" fill="url(#hg)" stroke="#1d3a90" stroke-width="0.6"/>
<text x="182.3" y="74.3" font-family="Liberation Sans" font-size="15" fill="#fff" text-anchor="middle">?</text>
<rect x="198.5" y="63.5" width="16" height="13" fill="#fff" stroke="#999" stroke-width="1"/>
<rect x="199" y="64" width="15" height="2" fill="#b4b4b4"/><rect x="199" y="66" width="15" height="1" fill="#d0d0d0"/>
<rect x="209.5" y="66" width="4.5" height="10" fill="#e4e4e4"/>
<line x1="209.5" y1="66" x2="209.5" y2="76" stroke="#9a9a9a" stroke-width="1"/>
<circle cx="211.8" cy="68.5" r="0.8" fill="#3a78c8"/><circle cx="211.8" cy="71" r="0.8" fill="#3a78c8"/><circle cx="211.8" cy="73.5" r="0.8" fill="#3a78c8"/>
<path d="M202.5 68 L206.5 71 L202.5 74 Z" fill="#3db83d"/>
<path d="M237 63.5 L243.5 68.8 L237 74 Z" fill="#b4b4b4" stroke="#9a9a9a" stroke-width="0.8"/>
<rect x="257.2" y="63.5" width="10.3" height="10.5" rx="1.5" fill="#4a4a4a" stroke="#3a3a3a" stroke-width="0.6"/>
<rect x="282" y="63.5" width="2.8" height="10.5" rx="0.8" fill="#1e88d9"/>
<rect x="288.2" y="63.5" width="2.8" height="10.5" rx="0.8" fill="#1e88d9"/>
<rect x="305" y="63.5" width="2.8" height="10.5" rx="0.8" fill="#6a6a6a"/>
<path d="M309 63.5 L317 68.8 L309 74 Z" fill="#3cbf32"/>
</svg>
<!-- left pane -->
<div class="a" style="left:1px;top:86px;width:127px;height:523px;background:#fff;border-top:1px solid #aeb3ba;border-right:2px solid #b5b9c0;border-bottom:1px solid #a0a0a0;border-left:1px solid #a8acb2"></div><div class="a" style="left:128px;top:86px;width:2px;height:523px;background:#fdfdfd"></div>
<div class="a" style="left:4px;top:89px;width:107px;height:18px;background:#d9d9d9"></div>
<svg class="a" style="left:5.5px;top:88.5px;width:17px;height:17px"><use href="#gearl"/></svg>
<div class="t" style="left:27px;top:91px;transform:scaleX(.865)">Services (Local)</div>
<!-- right pane -->
<div class="a" style="left:130px;top:86px;width:950px;height:503px;background:#fff;border-left:3px solid #777;border-top:2px solid #727272;border-bottom:2px solid #8a8a8a;border-right:1px solid #8a8a8a"></div>
<div class="a" style="left:133px;top:88px;width:945px;height:26px;background:#98b2d2"></div>
<div class="a" style="left:342px;top:104px;width:736px;height:20px;background:#fff;border-top-left-radius:9px"></div>
<svg class="a" style="left:142.5px;top:93px;width:17px;height:17px"><use href="#gearh"/></svg>
<div class="t" style="left:169px;top:94px">Services (Local)</div>
<!-- detail -->
<div class="t" style="left:138.5px;top:120px;font-weight:bold;color:#000;transform:scaleX(.988)">IvaraServer-80-7122tgserver</div>
<div class="t" style="left:137.5px;top:154px"><span style="color:#2a74d2;text-decoration:underline">Stop</span> the service</div>
<div class="t" style="left:137.5px;top:170px"><span style="color:#2a74d2;text-decoration:underline">Pause</span> the service</div>
<div class="t" style="left:137.5px;top:185.5px"><span style="color:#2a74d2;text-decoration:underline">Restart</span> the service</div>
<div class="t" style="left:137.5px;top:232.5px;transform:scaleX(.93)">Description:</div>
<div class="t" style="left:137.5px;top:248px;transform:scaleX(.93)">The 7122tgserver instance of the</div>
<div class="t" style="left:137.5px;top:263.5px;transform:scaleX(.957)">Application Server running on port 80.</div>
<!-- list header -->
<div class="t" style="left:358.5px;top:120px;transform:scaleX(.95)">Name</div>
<div class="t" style="left:641.5px;top:120px;transform:scaleX(.935)">Description</div>
<div class="t" style="left:730.5px;top:120px;transform:scaleX(.95)">Status</div>
<div class="t" style="left:799px;top:120px">Startup Type</div>
<div class="t" style="left:896px;top:120px">Log On As</div>
<svg class="a" style="left:490px;top:114px;width:8px;height:6px" viewBox="0 0 8 6"><path d="M1 5L4 2L7 5" fill="none" stroke="#888" stroke-width="1"/></svg>
<div class="a" style="left:635px;top:114px;width:1px;height:25px;background:#f1f1f1"></div>
<div class="a" style="left:725px;top:114px;width:1px;height:25px;background:#f1f1f1"></div>
<div class="a" style="left:792px;top:114px;width:1px;height:25px;background:#f1f1f1"></div>
<div class="a" style="left:889px;top:114px;width:1px;height:25px;background:#f1f1f1"></div>
<div class="a" style="left:971px;top:114px;width:1px;height:25px;background:#f1f1f1"></div>
<!-- selection -->
<div class="a" style="left:373.5px;top:139.2px;width:598.5px;height:19.4px;background:#0078d7;border:1px solid #1461b0"></div>
<div class="a" style="left:132px;top:586px;width:946px;height:2px;background:#fff"></div>
<svg class="gi" style="top:140.00px"><use href="#gears"/></svg>
<div class="t s" style="left:375px;top:141.50px;transform:scaleX(0.9133)">IvaraServer-80-7122tgserver</div>
<div class="t s" style="left:642.5px;top:141.50px">The 7122tgs<span class="el">...</span></div>
<div class="t s" style="left:730.8px;top:141.50px;transform:scaleX(1.0076)">Running</div>
<div class="t s" style="left:799.3px;top:141.50px;transform:scaleX(0.9020)">Automatic (De<span class="el">...</span></div>
<div class="t s" style="left:895.8px;top:141.50px;transform:scaleX(0.8930)">Local System</div>
<svg class="gi" style="top:159.73px"><use href="#gear"/></svg>
<div class="t" style="left:375px;top:161.23px;transform:scaleX(0.9244)">IvaraServer-80-712blankins</div>
<div class="t" style="left:642.5px;top:161.23px">The 712blan<span class="el">...</span></div>
<div class="t" style="left:799.3px;top:161.23px;transform:scaleX(0.9967)">Manual</div>
<div class="t" style="left:895.8px;top:161.23px;transform:scaleX(0.8930)">Local System</div>
<svg class="gi" style="top:179.45px"><use href="#gear"/></svg>
<div class="t" style="left:375px;top:180.95px;transform:scaleX(0.9469)">KtmRm for Distributed Transaction Coordinator</div>
<div class="t" style="left:642.5px;top:180.95px">Coordinates <span class="el">...</span></div>
<div class="t" style="left:799.3px;top:180.95px">Manual (Trigg<span class="el">...</span></div>
<div class="t" style="left:895.8px;top:180.95px">Network Se<span class="el">...</span></div>
<svg class="gi" style="top:199.18px"><use href="#gear"/></svg>
<div class="t" style="left:375px;top:200.68px;transform:scaleX(0.8984)">Language Experience Service</div>
<div class="t" style="left:642.5px;top:200.68px">Provides infr<span class="el">...</span></div>
<div class="t" style="left:799.3px;top:200.68px;transform:scaleX(0.9967)">Manual</div>
<div class="t" style="left:895.8px;top:200.68px;transform:scaleX(0.8930)">Local System</div>
<svg class="gi" style="top:218.91px"><use href="#gear"/></svg>
<div class="t" style="left:375px;top:220.41px;transform:scaleX(0.9434)">Link-Layer Topology Discovery Mapper</div>
<div class="t" style="left:642.5px;top:220.41px">Creates a Ne<span class="el">...</span></div>
<div class="t" style="left:799.3px;top:220.41px;transform:scaleX(0.9967)">Manual</div>
<div class="t" style="left:895.8px;top:220.41px;transform:scaleX(0.8930)">Local Service</div>
<svg class="gi" style="top:238.63px"><use href="#gear"/></svg>
<div class="t" style="left:375px;top:240.13px;transform:scaleX(0.9026)">Local Profile Assistant Service</div>
<div class="t" style="left:642.5px;top:240.13px">This service <span class="el">...</span></div>
<div class="t" style="left:799.3px;top:240.13px">Manual (Trigg<span class="el">...</span></div>
<div class="t" style="left:895.8px;top:240.13px;transform:scaleX(0.8930)">Local Service</div>
<svg class="gi" style="top:258.36px"><use href="#gear"/></svg>
<div class="t" style="left:375px;top:259.86px;transform:scaleX(0.9126)">Local Session Manager</div>
<div class="t" style="left:642.5px;top:259.86px">Core Windo<span class="el">...</span></div>
<div class="t" style="left:730.8px;top:259.86px;transform:scaleX(1.0076)">Running</div>
<div class="t" style="left:799.3px;top:259.86px;transform:scaleX(0.9554)">Automatic</div>
<div class="t" style="left:895.8px;top:259.86px;transform:scaleX(0.8930)">Local System</div>
<svg class="gi" style="top:278.09px"><use href="#gear"/></svg>
<div class="t" style="left:375px;top:279.59px">MessagingService_fd2ec</div>
<div class="t" style="left:642.5px;top:279.59px">Service supp<span class="el">...</span></div>
<div class="t" style="left:799.3px;top:279.59px">Manual (Trigg<span class="el">...</span></div>
<div class="t" style="left:895.8px;top:279.59px;transform:scaleX(0.8930)">Local System</div>
<svg class="gi" style="top:297.82px"><use href="#gear"/></svg>
<div class="t" style="left:375px;top:299.32px;transform:scaleX(0.9244)">Microsoft (R) Diagnostics Hub Standard Collec<span class="el">...</span></div>
<div class="t" style="left:642.5px;top:299.32px">Diagnostics <span class="el">...</span></div>
<div class="t" style="left:799.3px;top:299.32px;transform:scaleX(0.9967)">Manual</div>
<div class="t" style="left:895.8px;top:299.32px;transform:scaleX(0.8930)">Local System</div>
<svg class="gi" style="top:317.54px"><use href="#gear"/></svg>
<div class="t" style="left:375px;top:319.04px;transform:scaleX(0.9574)">Microsoft Account Sign-in Assistant</div>
<div class="t" style="left:642.5px;top:319.04px">Enables user<span class="el">...</span></div>
<div class="t" style="left:799.3px;top:319.04px">Manual (Trigg<span class="el">...</span></div>
<div class="t" style="left:895.8px;top:319.04px;transform:scaleX(0.8930)">Local System</div>
<svg class="gi" style="top:337.27px"><use href="#gear"/></svg>
<div class="t" style="left:375px;top:338.77px;transform:scaleX(0.9753)">Microsoft App-V Client</div>
<div class="t" style="left:642.5px;top:338.77px">Manages Ap<span class="el">...</span></div>
<div class="t" style="left:799.3px;top:338.77px">Disabled</div>
<div class="t" style="left:895.8px;top:338.77px;transform:scaleX(0.8930)">Local System</div>
<svg class="gi" style="top:357.00px"><use href="#gear"/></svg>
<div class="t" style="left:375px;top:358.50px;transform:scaleX(0.9244)">Microsoft iSCSI Initiator Service</div>
<div class="t" style="left:642.5px;top:358.50px">Manages Int<span class="el">...</span></div>
<div class="t" style="left:799.3px;top:358.50px;transform:scaleX(0.9967)">Manual</div>
<div class="t" style="left:895.8px;top:358.50px;transform:scaleX(0.8930)">Local System</div>
<svg class="gi" style="top:376.72px"><use href="#gear"/></svg>
<div class="t" style="left:375px;top:378.22px;transform:scaleX(0.9471)">Microsoft Office Click-to-Run Service</div>
<div class="t" style="left:642.5px;top:378.22px">Manages res<span class="el">...</span></div>
<div class="t" style="left:730.8px;top:378.22px;transform:scaleX(1.0076)">Running</div>
<div class="t" style="left:799.3px;top:378.22px;transform:scaleX(0.9554)">Automatic</div>
<div class="t" style="left:895.8px;top:378.22px;transform:scaleX(0.8930)">Local System</div>
<svg class="gi" style="top:396.45px"><use href="#gear"/></svg>
<div class="t" style="left:375px;top:397.95px;transform:scaleX(0.9483)">Microsoft Passport</div>
<div class="t" style="left:642.5px;top:397.95px">Provides pro<span class="el">...</span></div>
<div class="t" style="left:799.3px;top:397.95px">Manual (Trigg<span class="el">...</span></div>
<div class="t" style="left:895.8px;top:397.95px;transform:scaleX(0.8930)">Local System</div>
<svg class="gi" style="top:416.18px"><use href="#gear"/></svg>
<div class="t" style="left:375px;top:417.68px;transform:scaleX(0.9465)">Microsoft Passport Container</div>
<div class="t" style="left:642.5px;top:417.68px">Manages loc<span class="el">...</span></div>
<div class="t" style="left:799.3px;top:417.68px">Manual (Trigg<span class="el">...</span></div>
<div class="t" style="left:895.8px;top:417.68px;transform:scaleX(0.8930)">Local Service</div>
<svg class="gi" style="top:435.91px"><use href="#gear"/></svg>
<div class="t" style="left:375px;top:437.41px;transform:scaleX(0.9518)">Microsoft Policy Platform Local Authority</div>
<div class="t" style="left:799.3px;top:437.41px;transform:scaleX(0.9967)">Manual</div>
<div class="t" style="left:895.8px;top:437.41px;transform:scaleX(0.8930)">Local System</div>
<svg class="gi" style="top:455.63px"><use href="#gear"/></svg>
<div class="t" style="left:375px;top:457.13px;transform:scaleX(0.9264)">Microsoft Policy Platform Processor</div>
<div class="t" style="left:799.3px;top:457.13px;transform:scaleX(0.9967)">Manual</div>
<div class="t" style="left:895.8px;top:457.13px;transform:scaleX(0.8930)">Local System</div>
<svg class="gi" style="top:475.36px"><use href="#gear"/></svg>
<div class="t" style="left:375px;top:476.86px;transform:scaleX(0.9315)">Microsoft Software Shadow Copy Provider</div>
<div class="t" style="left:642.5px;top:476.86px">Manages so<span class="el">...</span></div>
<div class="t" style="left:799.3px;top:476.86px;transform:scaleX(0.9967)">Manual</div>
<div class="t" style="left:895.8px;top:476.86px;transform:scaleX(0.8930)">Local System</div>
<svg class="gi" style="top:495.09px"><use href="#gear"/></svg>
<div class="t" style="left:375px;top:496.59px;transform:scaleX(0.9150)">Microsoft Storage Spaces SMP</div>
<div class="t" style="left:642.5px;top:496.59px">Host service <span class="el">...</span></div>
<div class="t" style="left:799.3px;top:496.59px;transform:scaleX(0.9967)">Manual</div>
<div class="t" style="left:895.8px;top:496.59px">Network Se<span class="el">...</span></div>
<svg class="gi" style="top:514.81px"><use href="#gear"/></svg>
<div class="t" style="left:375px;top:516.31px;transform:scaleX(0.9335)">Microsoft Store Install Service</div>
<div class="t" style="left:642.5px;top:516.31px">Provides infr<span class="el">...</span></div>
<div class="t" style="left:799.3px;top:516.31px;transform:scaleX(0.9967)">Manual</div>
<div class="t" style="left:895.8px;top:516.31px;transform:scaleX(0.8930)">Local System</div>
<svg class="gi" style="top:534.54px"><use href="#gear"/></svg>
<div class="t" style="left:375px;top:536.04px;transform:scaleX(0.9282)">Microsoft Windows SMS Router Service.</div>
<div class="t" style="left:642.5px;top:536.04px">Routes mess<span class="el">...</span></div>
<div class="t" style="left:799.3px;top:536.04px">Manual (Trigg<span class="el">...</span></div>
<div class="t" style="left:895.8px;top:536.04px;transform:scaleX(0.8930)">Local Service</div>
<svg class="gi" style="top:554.27px"><use href="#gear"/></svg>
<div class="t" style="left:375px;top:555.77px;transform:scaleX(0.9390)">Mozilla Maintenance Service</div>
<div class="t" style="left:642.5px;top:555.77px">The Mozilla <span class="el">...</span></div>
<div class="t" style="left:799.3px;top:555.77px;transform:scaleX(0.9967)">Manual</div>
<div class="t" style="left:895.8px;top:555.77px;transform:scaleX(0.8930)">Local System</div>
<svg class="gi" style="top:573.99px"><use href="#gear"/></svg>
<div class="t" style="left:375px;top:575.49px;transform:scaleX(0.9781)">Natural Authentication</div>
<div class="t" style="left:642.5px;top:575.49px">Signal aggre<span class="el">...</span></div>
<div class="t" style="left:799.3px;top:575.49px">Manual (Trigg<span class="el">...</span></div>
<div class="t" style="left:895.8px;top:575.49px;transform:scaleX(0.8930)">Local System</div>
<!-- mask list bottom -->
<div class="a" style="left:132px;top:586px;width:947px;height:23px;background:#f0f0f0"></div>
<div class="a" style="left:130px;top:587px;width:948px;height:2px;background:#9a9a9a"></div><div class="a" style="left:201px;top:589px;width:877px;height:1px;background:#d4d4d4"></div>
<!-- scrollbar -->
<div class="a" style="left:1060px;top:114px;width:15.5px;height:472px;background:#f0f0f0"></div>
<div class="a" style="left:1060px;top:308.5px;width:16px;height:31px;background:#cdcdcd"></div>
<svg class="a" style="left:1063px;top:119px;width:10px;height:8px" viewBox="0 0 10 8"><path d="M2.3 6.3L5 3.2L7.7 6.3" fill="none" stroke="#606060" stroke-width="1.7"/></svg>
<svg class="a" style="left:1063px;top:574px;width:10px;height:8px" viewBox="0 0 10 8"><path d="M2.3 2.2L5 5.3L7.7 2.2" fill="none" stroke="#606060" stroke-width="1.7"/></svg>
<div class="a" style="left:1076px;top:86px;width:2px;height:503px;background:#909090"></div><div class="a" style="left:1078px;top:86px;width:1px;height:503px;background:#d8d8d8"></div>
<!-- tabs -->
<svg class="a" style="left:130px;top:588px;width:140px;height:22px" viewBox="0 0 140 22">
<path d="M1 1 L9.5 20 L63 20 L71 1" fill="#fff" stroke="#a0a0a0" stroke-width="1"/><path d="M1 1 L9.5 20" stroke="#707070" stroke-width="1"/><path d="M63 20 L71 1" stroke="#707070" stroke-width="1"/>
<path d="M70.5 1 L74 20 L125 20 L133 1" fill="#f0f0f0" stroke="#a0a0a0" stroke-width="1"/><path d="M70.5 1 L74 20" stroke="#808080" stroke-width="1"/><path d="M125 20 L133 1" stroke="#707070" stroke-width="1"/>
</svg>
<div class="t" style="left:140.5px;top:592px;transform:scaleX(.94)">Extended</div>
<div class="t" style="left:203.5px;top:592px;transform:scaleX(.94)">Standard</div>
<!-- status bar -->
<div class="a" style="left:1px;top:609px;width:1078px;height:1px;background:#e3e3e3"></div>
<div class="a" style="left:850px;top:611px;width:1px;height:21px;background:#e3e3e3"></div>
<div class="a" style="left:988px;top:611px;width:1px;height:21px;background:#e3e3e3"></div>
<div class="a" style="left:1px;top:632px;width:1078px;height:1px;background:#fff"></div>
<!-- frame -->
<div class="a" style="left:0;top:0;width:1080px;height:1px;background:#3c3c3c"></div>
<div class="a" style="left:0;top:0;width:1px;height:634px;background:#4a4a4a"></div>
<div class="a" style="left:1079px;top:0;width:1px;height:634px;background:#6a6a6a"></div>
<div class="a" style="left:0;top:633px;width:1080px;height:1px;background:#6a6a6a"></div>
</body></html>
